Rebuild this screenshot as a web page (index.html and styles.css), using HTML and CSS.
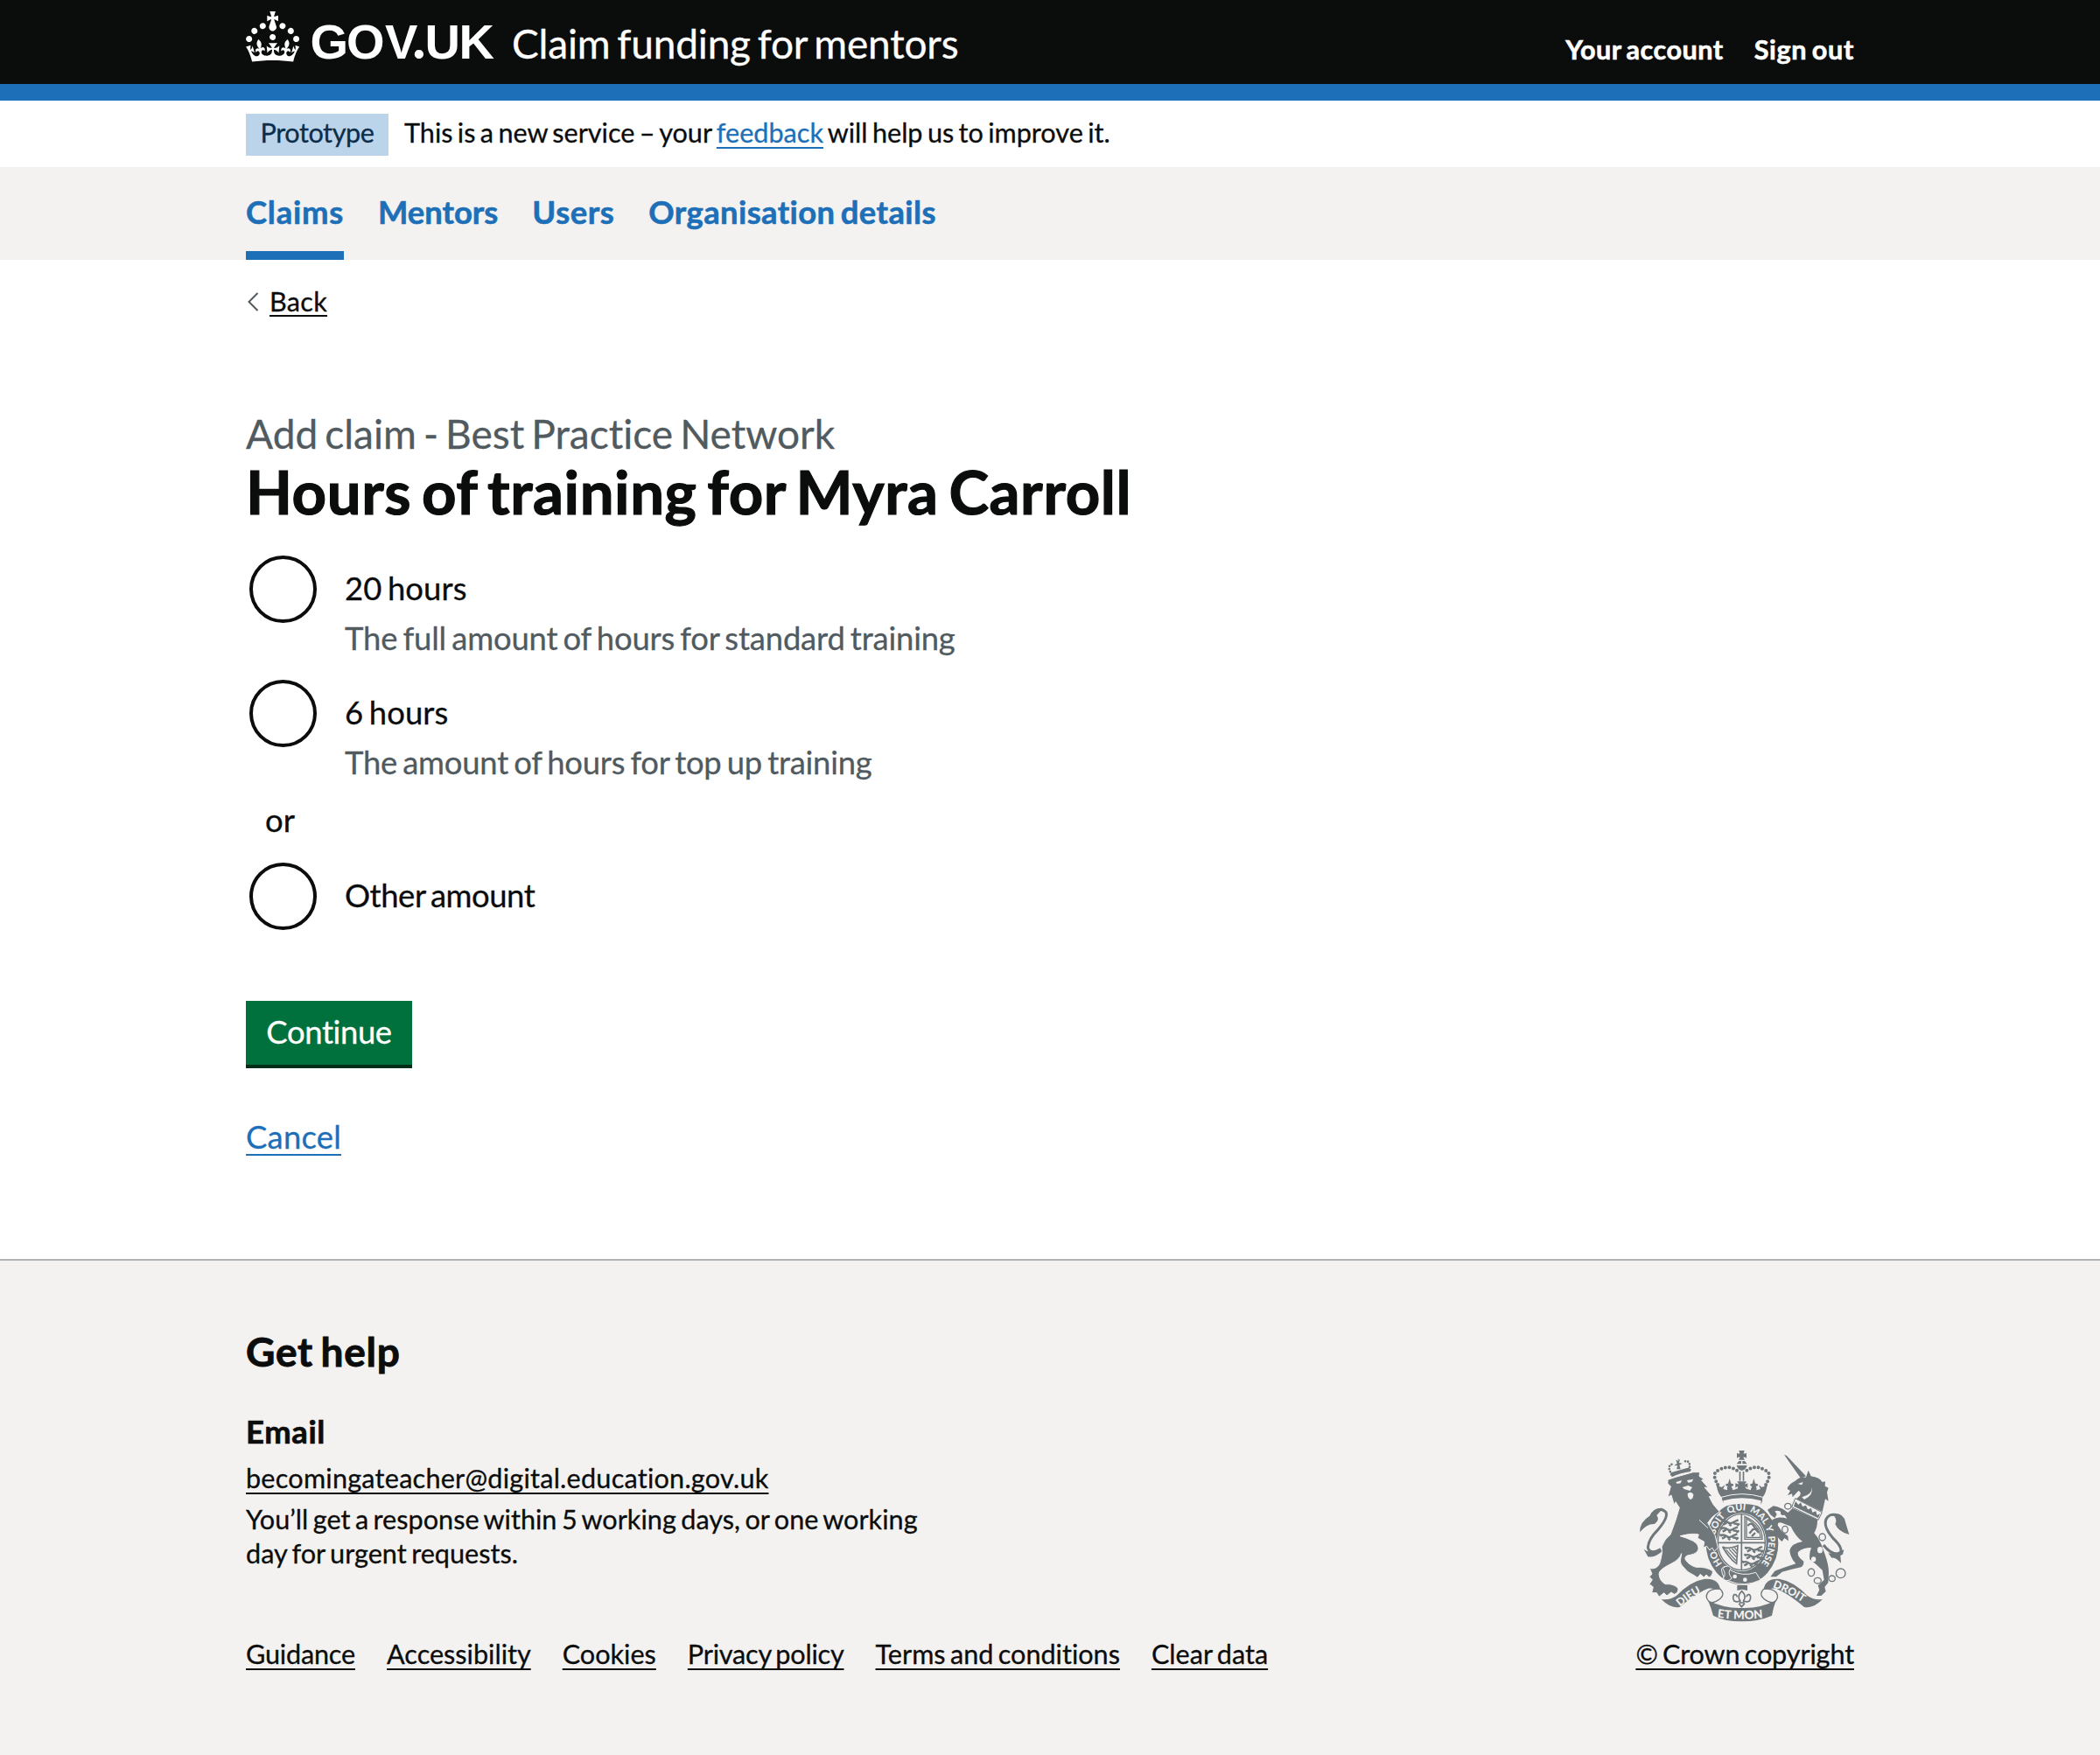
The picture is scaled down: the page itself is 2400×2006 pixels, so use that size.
FILE: index.html
```html
<!DOCTYPE html>
<html lang="en">
<head>
<meta charset="utf-8">
<title>Hours of training for Myra Carroll - Claim funding for mentors</title>
<link rel="stylesheet" href="styles.css">
</head>
<body>
<header class="header">
  <div class="container header-inner">
    <svg class="logo" viewBox="0 0 290 96" role="img" aria-label="GOV.UK">
      <path transform="translate(0 13) scale(1.914)" d="M22.6 10.4c-1 .4-2-.1-2.4-1-.4-.9.1-2 1-2.4.9-.4 2 .1 2.4 1s-.1 2-1 2.4m-5.9 6.7c-.9.4-2-.1-2.4-1-.4-.9.1-2 1-2.4.9-.4 2 .1 2.4 1s-.1 2-1 2.4m10.8-3.7c-1 .4-2-.1-2.4-1-.4-.9.1-2 1-2.4.9-.4 2 .1 2.4 1s0 2-1 2.4m3.3 4.8c-1 .4-2-.1-2.4-1-.4-.9.1-2 1-2.4.9-.4 2 .1 2.4 1s-.1 2-1 2.4M17 4.7l2.3 1.2V2.5l-2.3.7-.2-.2.9-3h-3.4l.9 3-.2.2c-.1.1-2.3-.7-2.3-.7v3.4L15 4.7c.1.1.1.2.2.2l-1.3 4c-.1.2-.1.4-.1.6 0 1.1.8 2 1.9 2.2h.7c1-.2 1.9-1.1 1.9-2.1 0-.2 0-.4-.1-.6l-1.3-4c-.1-.2 0-.2.1-.3m-7.6 5.7c.9.4 2-.1 2.4-1 .4-.9-.1-2-1-2.4-.9-.4-2 .1-2.4 1s0 2 1 2.4m-5 3c.9.4 2-.1 2.4-1 .4-.9-.1-2-1-2.4-.9-.4-2 .1-2.4 1s.1 2 1 2.4m-3.2 4.8c.9.4 2-.1 2.4-1 .4-.9-.1-2-1-2.4-.9-.4-2 .1-2.4 1s0 2 1 2.4m14.8 11c4.4 0 8.6.3 12.3.8 1.1-4.5 2.4-7 3.7-8.8l-2.5-.9c.2 1.3.3 1.9 0 2.7-.4-.4-.8-1.1-1.1-2.3l-1.2 4c.7-.5 1.3-.8 2-.9-1.1 2.5-2.6 3.1-3.5 3-1.1-.2-1.7-1.2-1.5-2.1.3-1.2 1.5-1.5 2.1-.1 1.1-2.3-.8-3-2-2.3 1.9-1.9 2.1-3.5.6-5.6-2.1 1.6-2.1 3.2-1.2 5.5-1.2-1.4-3.2-.6-2.5 1.6.9-1.4 2.1-.5 1.9.8-.2 1.1-1.7 2.1-3.5 1.9-2.7-.2-2.9-2.1-2.9-3.6.7-.1 1.9.5 2.9 1.9l.4-4.3c-1.1 1.1-2.1 1.4-3.2 1.4.4-1.2 2.1-3 2.1-3h-5.4s1.7 1.9 2.1 3c-1.1 0-2.1-.2-3.2-1.4l.4 4.3c1-1.4 2.2-2 2.9-1.9-.1 1.5-.2 3.4-2.9 3.6-1.9.2-3.4-.8-3.5-1.9-.2-1.3 1-2.2 1.9-.8.7-2.3-1.2-3-2.5-1.6.9-2.2.9-3.9-1.2-5.5-1.5 2-1.3 3.7.6 5.6-1.2-.7-3.1 0-2 2.3.6-1.4 1.8-1.1 2.1.1.2.9-.3 1.9-1.5 2.1-.9.2-2.4-.5-3.5-3 .6 0 1.2.3 2 .9l-1.2-4c-.3 1.1-.7 1.9-1.1 2.3-.3-.8-.2-1.4 0-2.7l-2.9.9C1.3 23 2.6 25.5 3.7 30c3.7-.5 7.9-.8 12.3-.8"/>
      <text class="wordmark" y="66.5" x="73.5 115 159 190.5 204.5 243.5">GOV<tspan class="wordmark-dot">.</tspan>UK</text>
    </svg>
    <a class="service">Claim funding for mentors</a>
    <nav class="account">
      <a class="t-account">Your account</a>
      <a class="t-signout">Sign out</a>
    </nav>
  </div>
</header>

<div class="container phase">
  <strong class="tag">Prototype</strong>
  <span>This is a new service – your <a class="link">feedback</a> will help us to improve it.</span>
</div>

<nav class="nav">
  <ul class="container nav-list">
    <li class="current t-claims">Claims</li>
    <li>Mentors</li>
    <li class="t-users">Users</li>
    <li class="t-org">Organisation details</li>
  </ul>
</nav>

<main class="container main">
  <a class="back">
    <svg class="chevron" viewBox="0 0 14 22"><path d="M12.5 1 2.5 11l10 10"/></svg>
    <span class="back-text">Back</span>
  </a>
  <span class="caption">Add claim - Best Practice Network</span>
  <h1 class="title">Hours of training for Myra Carroll</h1>
  <form class="radios">
    <div class="radio">
      <span class="circle"></span>
      <div><label class="label t-20">20 hours</label><div class="hint t-full">The full amount of hours for standard training</div></div>
    </div>
    <div class="radio">
      <span class="circle"></span>
      <div><label class="label t-20">6 hours</label><div class="hint t-top">The amount of hours for top up training</div></div>
    </div>
    <div class="or">or</div>
    <div class="radio">
      <span class="circle"></span>
      <div><label class="label t-other">Other amount</label></div>
    </div>
  </form>
  <button class="button">Continue</button>
  <a class="link cancel">Cancel</a>
</main>

<footer class="footer">
  <div class="container footer-inner">
    <div>
      <h2 class="help">Get help</h2>
      <h3 class="email">Email</h3>
      <a class="foot-link address">becomingateacher@digital.education.gov.uk</a>
      <p class="response">You’ll get a response within 5 working days, or one working<br>day for urgent requests.</p>
      <ul class="foot-links">
        <li><a class="foot-link t-guid">Guidance</a></li>
        <li><a class="foot-link">Accessibility</a></li>
        <li><a class="foot-link">Cookies</a></li>
        <li><a class="foot-link t-privacy">Privacy policy</a></li>
        <li><a class="foot-link">Terms and conditions</a></li>
        <li><a class="foot-link">Clear data</a></li>
      </ul>
    </div>
    <div class="copyright">
      <svg class="crest" viewBox="30 40 747 600" aria-hidden="true">
        <defs>
          <path id="garter" d="M391 473A92 108 0 0 1 391 257A92 108 0 0 1 391 473"/>
          <path id="dieu" d="M180 588Q226 546 290 522"/>
          <path id="mon" d="M300 623Q393 637 490 623"/>
          <path id="droit" d="M497 521Q560 540 628 594"/>
          <g id="fold">
            <path d="M116 562Q145 566 168 550Q215 500 265 492L288 520Q235 540 180 588Q150 596 116 562Z"/>
            <path d="M262 493Q312 488 318 528L276 524Z"/>
            <path class="line" d="M318 527Q336 545 318 560Q303 573 284 574Q262 556 276 538Q290 524 318 527Z"/>
          </g>
          <path id="lions" class="thick" d="M2 8Q14 2 24 10T50 6L60 2M8 18L20 12M28 16L36 22M44 14L58 16M0 4L8 8M56 22L64 14"/>
        </defs>
        <!-- garter and shield -->
        <ellipse cx="393" cy="370" rx="124" ry="142"/>
        <ellipse class="paper" cx="391" cy="366" rx="85" ry="100"/>
        <ellipse class="line" cx="391" cy="366" rx="81" ry="96"/>
        <path class="line5" d="M391 268V464M308 368H474"/>
        <use href="#lions" x="320" y="288"/><use href="#lions" x="318" y="312"/><use href="#lions" x="316" y="336"/>
        <use href="#lions" x="402" y="380"/><use href="#lions" x="400" y="404"/><use href="#lions" x="392" y="428"/>
        <path class="line" d="M402 278V356H462Q464 306 402 278ZM408 286V350H456Q454 312 408 286Z"/>
        <path class="thick" d="M412 310Q424 296 432 310T450 334M418 336L430 322L448 320M426 346L438 334"/>
        <path class="line5" d="M326 382Q340 392 378 378L374 440Q350 424 326 382Z"/>
        <path class="line" d="M338 392L372 430M348 390L374 418M358 388L375 406M366 384L376 396"/>
        <g class="motto">
          <text><textPath href="#garter" startOffset="76">HO</textPath></text>
          <text><textPath href="#garter" startOffset="182">SOIT</textPath></text>
          <text><textPath href="#garter" startOffset="268">QUI</textPath></text>
          <text><textPath href="#garter" startOffset="342">MAL</textPath></text>
          <text><textPath href="#garter" startOffset="419">Y</textPath></text>
          <text><textPath href="#garter" startOffset="452">PENSE</textPath></text>
        </g>
        <path class="edge" d="M322 458Q336 438 352 462Q395 486 440 470L456 496Q400 522 350 500Q326 496 322 458Z"/>
        <path class="edge" d="M326 456Q345 440 355 456Q340 470 358 490Q340 506 328 490Q340 475 326 456Z"/>
        <circle class="paper" cx="368" cy="484" r="7"/><circle class="paper" cx="403" cy="495" r="7"/>
        <!-- crown -->
        <path d="M382 52H401L398 62Q402 64 408 60V78Q402 73 397 75L402 84H381L386 75Q380 73 375 78V60Q381 64 385 62ZM382 88H390V98H374ZM394 88H402L410 98H394ZM374 103H410Q406 118 392 121Q378 118 374 103ZM383 124H388V156H383ZM395 124H400V156H395Z"/>
        <path class="dots" d="M318 182Q282 130 312 120Q345 98 378 122M466 182Q502 130 472 120Q440 98 407 122"/>
        <path d="M304 164L320 180L334 170L328 184L342 188Q340 178 344 174Q334 176 338 166L345 165L350 148L355 165L362 166Q366 176 356 174Q358 180 362 188L378 182V174L370 180V164L382 168L376 158H408L402 168L412 164V180L404 174L406 182L422 188Q424 180 427 174Q418 176 422 166L428 165L433 148L438 165L446 166Q450 176 440 174Q444 180 442 188L456 184L450 170L464 180L480 164Q476 198 464 212Q392 190 322 212Q308 198 304 164Z"/>
        <path class="edge" d="M322 212Q392 190 464 212V222Q462 238 450 238Q392 222 336 238Q324 234 322 212Z"/>
        <path class="paper" d="M328 224Q392 206 458 224Q458 240 448 242Q392 226 338 242Q328 240 328 224Z"/>
        <!-- lion -->
        <path class="edge" d="M138 152L165 143L225 126L248 126L246 140L262 150L254 154L277 180L264 178L290 208L280 210Q292 240 316 262Q290 275 275 300L300 342L310 385L298 398L290 385L282 394L272 380L260 385L263 365L240 352L244 340Q225 334 180 345Q200 350 225 362Q245 374 243 390Q240 405 215 410Q195 412 198 425Q210 445 235 452Q270 450 292 465Q293 480 280 487L270 478L262 487L250 476L240 488L225 478Q205 470 195 455Q178 440 182 425L185 405Q180 425 150 440Q108 460 108 475Q110 500 130 510Q160 508 174 525Q175 540 160 545L150 538L135 550L125 540L108 554L100 540L83 540L88 520L75 510L85 495L75 485L84 475L76 456Q100 460 110 440Q122 400 117 382Q127 355 147 340Q167 290 178 248L165 228L160 238L150 205L138 212L148 175L138 165Z"/>
        <path class="paper" d="M166 160L186 154L182 164L170 166ZM204 154L226 150L220 160L208 162ZM188 178L208 172L222 178L214 190L194 184ZM206 200Q216 190 226 202Q226 218 216 220Q206 216 206 200Z"/>
        <path class="tail" d="M116 394Q72 408 70 384Q72 356 104 324Q140 282 132 264Q118 246 92 262"/>
        <path d="M122 250Q90 246 76 276Q42 296 42 332Q68 302 92 304Q112 290 100 274ZM56 390Q75 408 112 386L116 400Q92 420 70 416Z"/>
        <path class="paperline" d="M246 290L276 318"/>
        <path d="M148 128L212 110L216 124Q182 128 152 143Z"/>
        <path class="smalldots" d="M150 134L142 112Q144 98 160 98M214 118L212 94Q204 84 190 92"/>
        <path d="M166 84L176 88L172 80L180 84L176 94L188 96L178 102L182 116H168L172 104L160 104L170 96Z"/>
        <!-- unicorn -->
        <path d="M537 66L546 70L612 140L594 147Z"/>
        <path d="M548 184Q548 170 575 156Q590 140 612 144L620 120L629 140Q658 144 668 160L678 158L677 174L689 180L684 195L689 225L678 218L673 240L668 262L578 218Q604 200 586 190L566 212L564 200L549 206L558 190Z"/>
        <path class="paper" d="M584 166L602 160L598 170ZM598 212Q634 202 632 178Q638 206 606 220Z"/>
        <path d="M566 250L651 289Q652 315 640 335Q662 360 672 395Q690 440 690 470L688 505L676 520L680 535L664 550H648L658 530L653 515L674 495L668 462Q645 440 625 425Q622 405 630 385Q600 385 585 400Q580 415 604 432Q605 447 595 452Q560 460 530 468L510 485H490L505 465Q540 452 577 440Q558 420 556 395Q562 370 600 364Q575 345 560 312L530 300Q512 295 516 310L530 330L550 345L552 362L538 352L530 364Q515 355 505 330Q490 300 498 288Q520 276 547 285L540 275Q520 252 505 260L512 270L505 284L490 272L480 255L500 242Q530 246 550 265Z"/>
        <path class="collar" d="M575 216L667 264L654 290L563 246Z"/>
        <path d="M570 243L576 226L586 238L594 230L600 244L612 240L618 254L630 250L634 264L646 260L650 274L660 268L654 284Z"/>
        <path class="tail" d="M672 376Q700 412 728 406Q742 388 706 354Q664 306 686 280Q704 262 728 284"/>
        <path d="M700 268Q742 262 748 300L760 340Q722 330 712 304Q722 286 700 268ZM688 404Q710 408 742 392L738 408L730 412L732 438Q712 416 700 420Z"/>
        <g class="chain">
          <ellipse cx="550" cy="243" rx="11" ry="10"/><ellipse cx="540" cy="323" rx="10" ry="12"/><ellipse cx="668" cy="349" rx="11" ry="12"/>
          <ellipse cx="630" cy="470" rx="11" ry="13"/><ellipse cx="652" cy="498" rx="12" ry="10"/><ellipse cx="701" cy="491" rx="11" ry="10"/><circle cx="731" cy="473" r="16"/>
        </g>
        <ellipse class="paper" cx="660" cy="393" rx="9" ry="11"/><ellipse class="paper" cx="638" cy="425" rx="8" ry="9"/><ellipse cx="533" cy="266" rx="8" ry="8"/>
        <!-- scroll -->
        <use href="#fold"/><use href="#fold" transform="translate(785 0) scale(-1 1)"/>
        <path d="M276 566Q330 594 393 592Q455 594 509 566Q500 590 495 618Q450 638 393 638Q330 638 294 618Q286 590 276 566Z"/>
        <g class="motto scroll">
          <text><textPath href="#dieu">DIEU</textPath></text>
          <text class="mon"><textPath href="#mon" startOffset="8">ET MON</textPath></text>
          <text><textPath href="#droit">DROIT</textPath></text>
        </g>
        <path d="M376 514H411V532L393 528L376 532Z"/>
        <path class="line5" d="M392 534Q374 552 386 566V574H398V566Q410 552 392 534ZM386 566Q378 574 366 568Q358 554 366 546Q374 544 376 554M398 566Q406 574 418 568Q426 554 418 546Q410 544 408 554M382 576L391 588L402 576"/>
      </svg>
      <a class="foot-link t-crown">© Crown copyright</a>
    </div>
  </div>
</footer>
</body>
</html>
```
FILE: styles.css
```css
* { box-sizing: border-box; word-spacing: -0.08em; }
body {
  margin: 0;
  background: #fff;
  color: #0b0c0c;
  font-family: Lato, "Liberation Sans", sans-serif;
  font-size: 36.4px;
  font-variant-ligatures: none;
  -webkit-text-stroke: 0.3px;
}
h1, h2, h3, p, ul { margin: 0; padding: 0; }
ul { list-style: none; }
.container { width: 1838px; margin: 0 auto; }

/* Header */
.header { height: 115px; background: #0b0c0c; border-bottom: 19px solid #1d70b8; color: #fff; }
.header-inner { display: flex; align-items: flex-start; }
.logo { width: 290px; height: 96px; fill: #fff; flex: none; -webkit-text-stroke: 0; }
.wordmark { font: bold 56px "Liberation Sans", sans-serif; }
.wordmark-dot { font: 900 62px Lato, sans-serif; }
.service { margin: 27px 0 0 14px; font-size: 46px; line-height: 46px; letter-spacing: -0.004em; }
.account { display: flex; gap: 35px; margin: 41px 0 0 auto; font-size: 30.6px; line-height: 31px; font-weight: 700; -webkit-text-stroke: 0.6px; }
.t-account { letter-spacing: 0.016em; }
.t-signout { letter-spacing: 0.021em; }

/* Phase banner */
.phase { display: flex; align-items: flex-start; gap: 18px; height: 76px; padding-top: 15px; font-size: 30.6px; line-height: 43px; }
.tag { width: 163px; height: 48px; background: #bbd4ea; color: #0c2d4a; font-weight: 400; text-align: center; letter-spacing: -0.013em; }
.link, .foot-link, .back-text {
  text-decoration: underline;
  text-decoration-thickness: 2px;
  text-underline-offset: 5px;
  text-decoration-skip-ink: none;
}
.link { color: #1d70b8; }

/* Primary navigation */
.nav { height: 106px; background: #f3f2f1; }
.nav-list { display: flex; gap: 39px; color: #1d70b8; font-weight: 700; line-height: 90px; -webkit-text-stroke: 0.6px; }
.nav-list li { height: 106px; padding-top: 6px; }
.nav-list .current { border-bottom: 10px solid #1d70b8; }
.t-claims { letter-spacing: 0.0215em; }
.t-users { letter-spacing: 0.0155em; }
.t-org { letter-spacing: 0.011em; }

/* Main */
.main { height: 1142px; padding-top: 29px; }
.back { display: flex; align-items: flex-start; width: max-content; font-size: 30.6px; line-height: 38px; letter-spacing: 0.009em; }
.back-text { text-underline-offset: 4px; }
.chevron { width: 14px; height: 22px; margin: 8px 12px 0 1px; fill: none; stroke: #505a5f; stroke-width: 2; }
.caption { display: block; margin-top: 103px; color: #505a5f; font-size: 46px; line-height: 57px; }
.title { margin-top: -1px; font-size: 68.9px; line-height: 77px; letter-spacing: 0.0083em; -webkit-text-stroke: 1.2px; }
.radios { margin-top: 35px; }
.radio { display: flex; gap: 32px; padding-left: 4px; margin-bottom: 25px; }
.circle { flex: none; width: 77px; height: 77px; border: 4px solid #0b0c0c; border-radius: 50%; }
.label { display: block; padding-top: 3px; line-height: 68px; }
.hint { color: #505a5f; line-height: 46px; }
.or { margin: -6px 0 25px; padding-left: 22px; line-height: 48px; }
.t-20 { letter-spacing: 0.003em; }
.t-full { letter-spacing: -0.0045em; }
.t-top { letter-spacing: -0.006em; }
.t-other { letter-spacing: -0.012em; }
.button {
  display: block; width: 190px; height: 73px; margin: 81px 0 0; padding: 0 0 2px;
  border: 0; background: #00703c; box-shadow: 0 4px 0 #002d18;
  color: #fff; font: inherit; line-height: 71px; letter-spacing: -0.01em;
}
.cancel { display: block; width: max-content; margin-top: 58px; line-height: 48px; letter-spacing: 0.0066em; text-underline-offset: 6px; }

/* Footer */
.footer { height: 567px; border-top: 2px solid #b1b4b6; background: #f3f2f1; }
.footer-inner { display: flex; justify-content: space-between; align-items: flex-end; padding-top: 75px; font-size: 30.6px; line-height: 38.3px; }
.help { font-size: 46px; line-height: 57px; letter-spacing: 0.018em; -webkit-text-stroke: 0.9px; }
.email { margin-top: 39px; font-size: 36.4px; line-height: 48px; letter-spacing: 0.018em; -webkit-text-stroke: 0.7px; }
.address { display: block; width: max-content; margin-top: 11px; letter-spacing: 0.0078em; }
.response { margin-top: 9px; letter-spacing: 0.001em; }
.foot-links { display: flex; gap: 36px; margin-top: 77px; }
.t-guid { letter-spacing: -0.0057em; }
.t-privacy { letter-spacing: -0.007em; }
.copyright { display: flex; flex-direction: column; align-items: flex-end; }
.t-crown { letter-spacing: -0.004em; }
.crest { width: 249px; height: 200px; margin-bottom: 18px; fill: #6f777b; -webkit-text-stroke: 0; }
.crest .paper { fill: #f3f2f1; }
.crest .line { fill: none; stroke: #6f777b; stroke-width: 4; }
.crest .line5 { fill: none; stroke: #6f777b; stroke-width: 5; }
.crest .thick { fill: none; stroke: #6f777b; stroke-width: 7; }
.crest .tail { fill: none; stroke: #6f777b; stroke-width: 9; }
.crest .edge { stroke: #f3f2f1; stroke-width: 3; }
.crest .collar { fill: #f3f2f1; stroke: #6f777b; stroke-width: 3; }
.crest .paperline { fill: none; stroke: #f3f2f1; stroke-width: 3; }
.crest .dots { fill: none; stroke: #6f777b; stroke-width: 12; stroke-linecap: round; stroke-dasharray: 0 14; }
.crest .smalldots { fill: none; stroke: #6f777b; stroke-width: 8; stroke-linecap: round; stroke-dasharray: 0 10; }
.crest .chain { fill: #f3f2f1; stroke: #6f777b; stroke-width: 4; }
.motto { fill: #f3f2f1; font: 900 32px Lato, sans-serif; }
.motto * { word-spacing: 0; }
.scroll { font-size: 37px; }
.mon { font-size: 40px; }
```
